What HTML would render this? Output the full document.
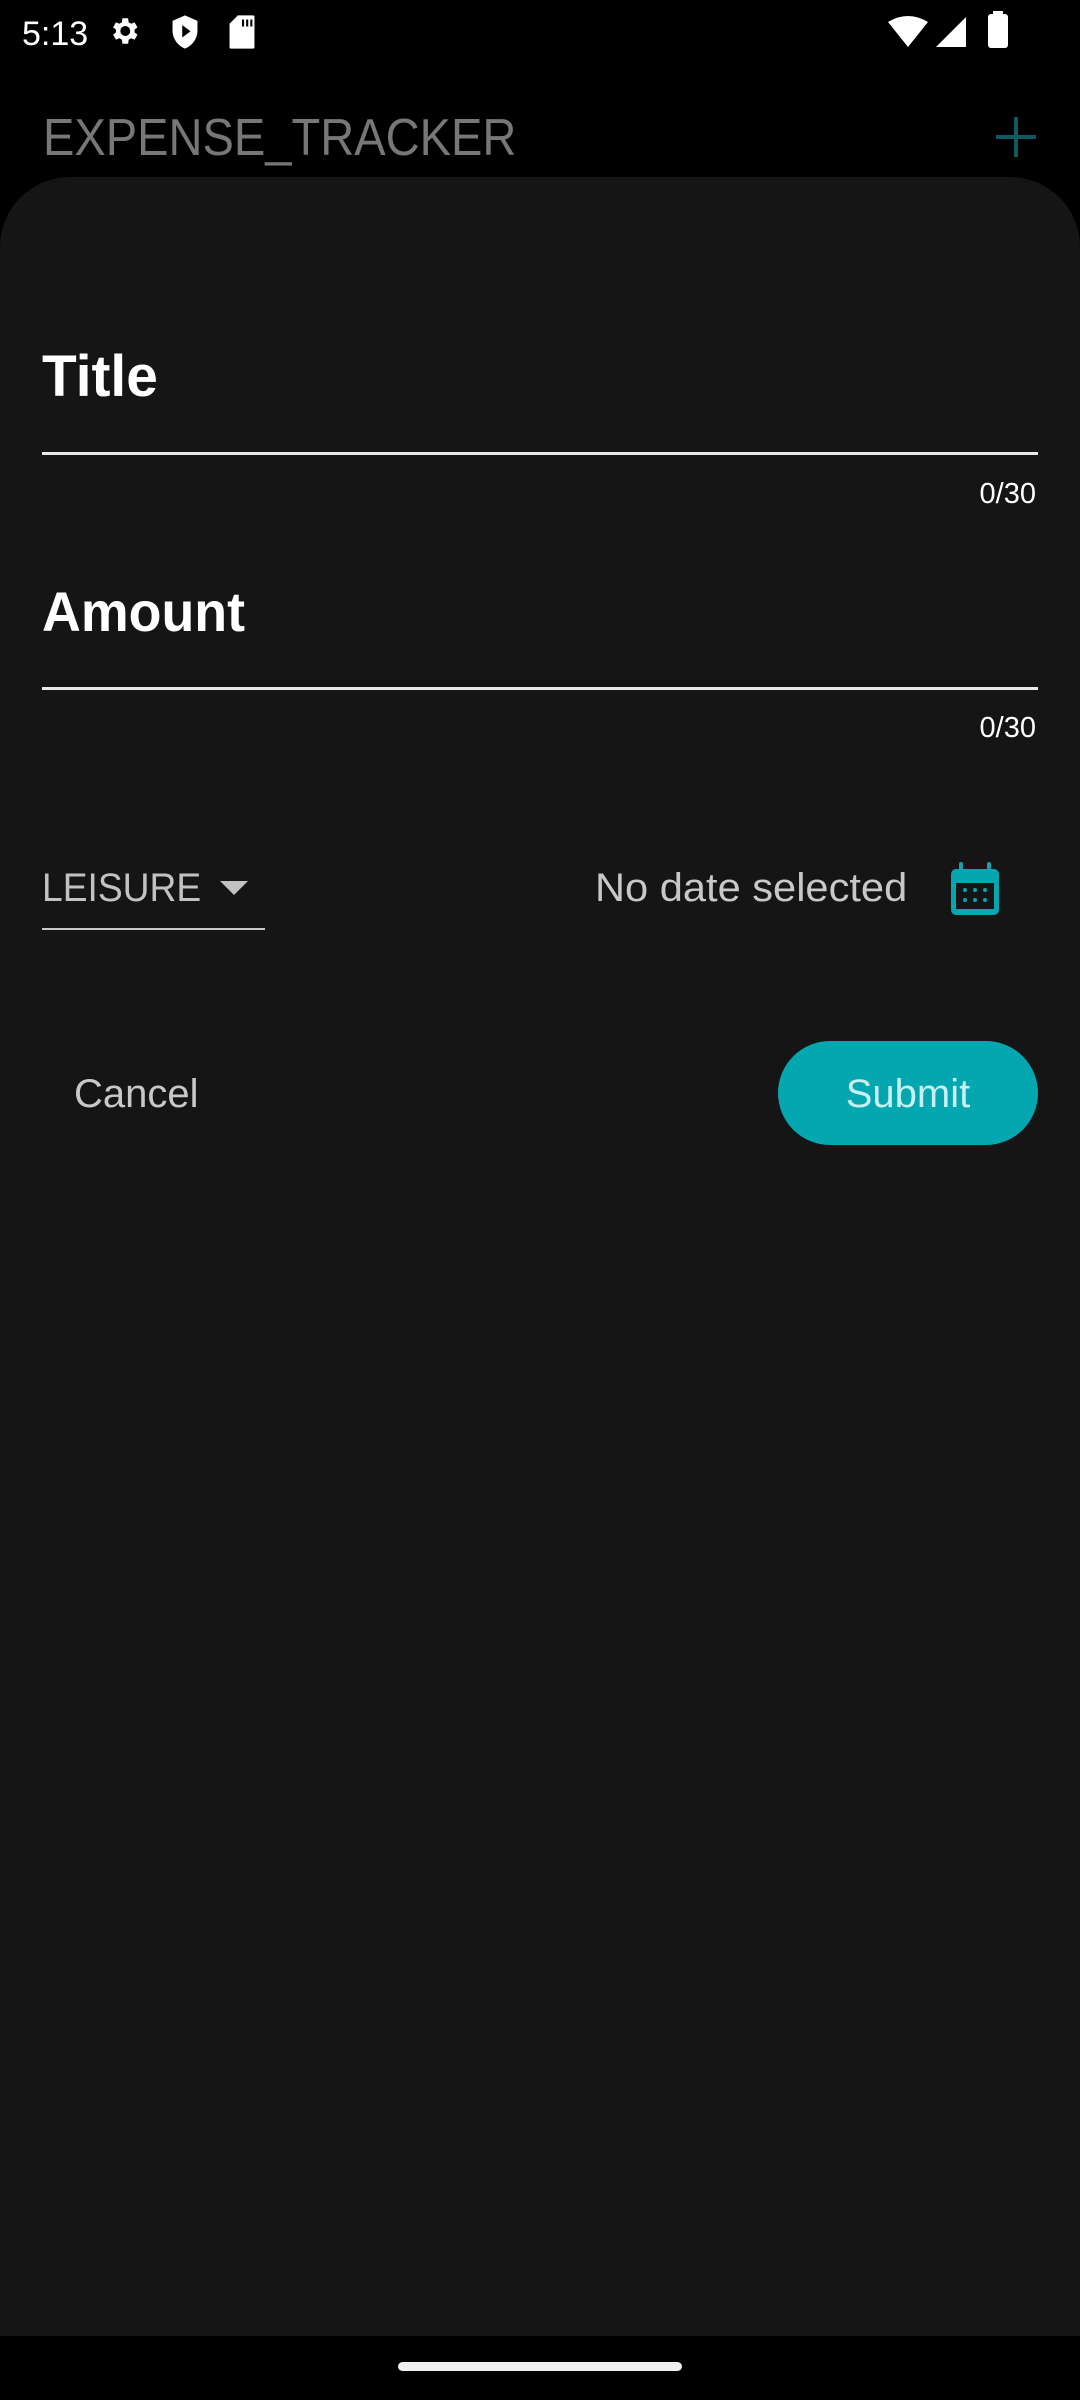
<!DOCTYPE html>
<html><head><meta charset="utf-8"><style>
*{margin:0;padding:0;box-sizing:border-box}
body{width:1080px;height:2400px;background:#000;position:relative;overflow:hidden;font-family:"Liberation Sans",sans-serif}
.a{position:absolute;white-space:nowrap;transform-origin:left top}
</style></head><body>
<div class="a" style="left:22px;top:14px;font-size:34px;color:#fff;line-height:40px">5:13</div>
<svg class="a" style="left:107px;top:14px" width="34" height="34" viewBox="0 0 24 24"><path fill="#fff" d="M19.4 13a7.5 7.5 0 0 0 0-2l2.1-1.6-2-3.5-2.5 1a7 7 0 0 0-1.7-1L14.9 3h-4l-.4 2.9a7 7 0 0 0-1.700 1l-2.5-1-2 3.5L6.4 11a7.5 7.5 0 0 0 0 2l-2.1 1.6 2 3.5 2.5-1a7 7 0 0 0 1.7 1l.4 2.9h4l.4-2.9a7 7 0 0 0 1.7-1l2.5 1 2-3.5zM12.9 15.5a3.5 3.5 0 1 1 0-7 3.5 3.5 0 0 1 0 7z"/></svg>
<svg class="a" style="left:168px;top:14px" width="34" height="36" viewBox="0 0 24 26"><path fill="#fff" d="M12 1 3 5v7c0 6 4 11 9 13 5-2 9-7 9-13V5z"/><path fill="#000" d="M10 8v9l6-4.5z"/></svg>
<svg class="a" style="left:228px;top:14px" width="28" height="36" viewBox="0 0 20 26"><path fill="#fff" d="M7 1h11a1 1 0 0 1 1 1v22a1 1 0 0 1-1 1H2a1 1 0 0 1-1-1V7z"/><path fill="#000" d="M10 4h1.5v5H10zM13 4h1.5v5H13zM16 4h1.5v5H16z"/></svg>
<svg class="a" style="left:888px;top:16px" width="40" height="32" viewBox="0 0 40 32"><path fill="#fff" d="M0 6Q20-6 40 6L20 31z"/></svg>
<svg class="a" style="left:935px;top:16px" width="32" height="32" viewBox="0 0 32 32"><path fill="#fff" d="M31 1v30H1z"/></svg>
<div class="a" style="left:988px;top:14px;width:20px;height:34px;background:#fff;border-radius:3px"></div>
<div class="a" style="left:993px;top:11px;width:10px;height:5px;background:#fff"></div>

<div class="a" style="left:43px;top:108px;font-size:52px;color:#777;line-height:60px;transform:scaleX(0.905)">EXPENSE_TRACKER</div>
<div class="a" style="left:996px;top:135px;width:40px;height:4px;background:#0d5b60"></div>
<div class="a" style="left:1014px;top:117px;width:4px;height:40px;background:#0d5b60"></div>

<div class="a" style="left:0;top:177px;width:1080px;height:2159px;background:#151515;border-radius:70px 70px 0 0"></div>

<div class="a" style="left:42px;top:344px;font-size:58px;font-weight:bold;color:#fff;line-height:66px;transform:scaleX(0.98)">Title</div>
<div class="a" style="left:42px;top:452px;width:996px;height:3px;background:#e8e8e8"></div>
<div class="a" style="right:44px;top:478px;font-size:29px;color:#fff;line-height:32px">0/30</div>

<div class="a" style="left:42px;top:579px;font-size:56px;font-weight:bold;color:#fff;line-height:66px;transform:scaleX(0.96)">Amount</div>
<div class="a" style="left:42px;top:687px;width:996px;height:3px;background:#e8e8e8"></div>
<div class="a" style="right:44px;top:712px;font-size:29px;color:#fff;line-height:32px">0/30</div>

<div class="a" style="left:42px;top:864px;font-size:40px;color:#c2c2c2;line-height:48px;transform:scaleX(0.93)">LEISURE</div>
<svg class="a" style="left:220px;top:881px" width="28" height="16" viewBox="0 0 28 16"><path fill="#c2c2c2" d="M0 0h28L14 14z"/></svg>
<div class="a" style="left:42px;top:928px;width:223px;height:2px;background:#c8c8c8"></div>
<div class="a" style="left:595px;top:864px;font-size:40px;color:#c8c8c8;line-height:48px;transform:scaleX(1.04)">No date selected</div>
<svg class="a" style="left:951px;top:862px" width="48" height="53" viewBox="0 0 48 53"><rect x="0" y="7" width="48" height="46" rx="5" fill="#04a7b0"/><rect x="8" y="0" width="4" height="10" rx="2" fill="#04a7b0"/><rect x="36" y="0" width="4" height="10" rx="2" fill="#04a7b0"/><rect x="5" y="21" width="38" height="26" fill="#151515"/><g fill="#04a7b0"><circle cx="14" cy="28" r="2"/><circle cx="24" cy="28" r="2"/><circle cx="34" cy="28" r="2"/><circle cx="14" cy="38" r="2"/><circle cx="24" cy="38" r="2"/><circle cx="34" cy="38" r="2"/></g></svg>

<div class="a" style="left:74px;top:1070px;font-size:40px;color:#c8c8c8;line-height:48px">Cancel</div>
<div class="a" style="left:778px;top:1041px;width:260px;height:104px;background:#04a7b0;border-radius:52px"></div>
<div class="a" style="left:778px;top:1070px;width:260px;text-align:center;font-size:40px;color:#c8f0f0;line-height:48px">Submit</div>

<div class="a" style="left:398px;top:2362px;width:284px;height:9px;background:#f0f0f0;border-radius:5px"></div>
</body></html>
